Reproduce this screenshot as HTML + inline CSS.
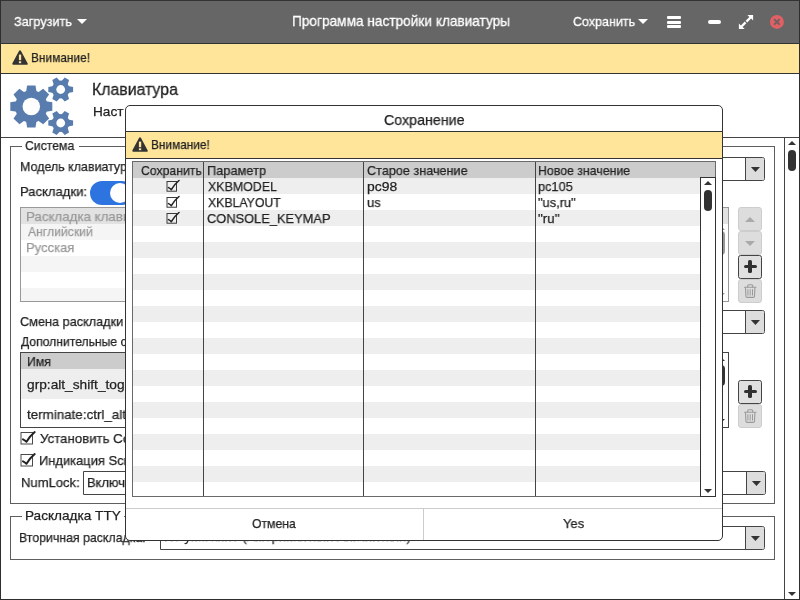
<!DOCTYPE html>
<html lang="ru">
<head>
<meta charset="utf-8">
<title>Программа настройки клавиатуры</title>
<style>
*{box-sizing:border-box;margin:0;padding:0}
html,body{width:800px;height:600px;overflow:hidden;background:#fff}
body{font-family:"Liberation Sans","DejaVu Sans",sans-serif;font-size:13px;color:#222;position:relative}
.a,.t{position:absolute}
.t{white-space:nowrap;line-height:1;transform-origin:0 0;-webkit-text-stroke:0.25px #222;will-change:transform}
#root{position:absolute;left:0;top:0;width:800px;height:600px;will-change:transform}
.warn{position:absolute;background:#ffe599}
.ln{position:absolute;background:#444}
.combo{position:absolute;border:1px solid #444;border-radius:0 2.5px 2.5px 0;background:#fff;height:24px}
.combo i{position:absolute;right:0;top:0;bottom:0;width:19px;background:#ddd;border-left:1px solid #444;border-radius:0 1.5px 1.5px 0}
.combo svg{position:absolute;left:0;top:0}
.fs{position:absolute;border:1px solid #5e5e5e}
.sq{position:absolute;width:24px;height:24px;border:1px solid #444;border-radius:2.5px;background:#e0e0e0}
.sq.dis{border-color:#cdcdcd;background:#dddddd;border-radius:3px}
.list{position:absolute;border:1px solid #444;background:#fff;overflow:hidden}
.tri-u{position:absolute;width:0;height:0;border:5px solid transparent;border-bottom:5px solid #333;border-top:0}
.tri-d{position:absolute;width:0;height:0;border:5px solid transparent;border-top:5px solid #333;border-bottom:0}
.tri-u.s{border-width:0 4px 4.2px 4px}.tri-d.s{border-width:4.2px 4px 0 4px}
.pill{position:absolute;background:#333;border-radius:4px}
</style>
</head>
<body>
<div id="root">
<!-- main window frame -->
<div class="a" style="left:0;top:0;width:800px;height:600px;border:1px solid #2e2e2e;background:#fff"></div>
<!-- title bar -->
<div class="a" style="left:1px;top:0;width:798px;height:44px;background:#666;border-top:1px solid #333;border-bottom:1px solid #333"></div>
<div class="t" style="left:13.62px;top:15px;font-size:13.6px;transform:scaleX(0.9324);color:#fff;-webkit-text-stroke:0.3px #fff;">Загрузить</div>
<div class="a" style="left:76.5px;top:19px;border:5px solid transparent;border-top:5.5px solid #fff;border-bottom:0"></div>
<div class="t" style="left:291.91px;top:13px;font-size:15px;transform:scaleX(0.9100);color:#fff;-webkit-text-stroke:0.3px #fff;">Программа настройки клавиатуры</div>
<div class="t" style="left:573.38px;top:15px;font-size:13.6px;transform:scaleX(0.9191);color:#fff;-webkit-text-stroke:0.3px #fff;">Сохранить</div>
<div class="a" style="left:638px;top:19px;border:5px solid transparent;border-top:5.5px solid #fff;border-bottom:0"></div>
<!-- hamburger -->
<div class="a" style="left:667px;top:16.2px;width:14.4px;height:3.1px;background:#fff;border-radius:1px"></div>
<div class="a" style="left:667px;top:20.6px;width:14.4px;height:3.1px;background:#fff;border-radius:1px"></div>
<div class="a" style="left:667px;top:25px;width:14.4px;height:3.1px;background:#fff;border-radius:1px"></div>
<!-- minimize -->
<div class="a" style="left:707.5px;top:19.5px;width:13.5px;height:4.5px;background:#fff;border-radius:2px"></div>
<!-- expand -->
<svg class="a" style="left:738px;top:14px" width="16" height="16" viewBox="0 0 16 16"><g fill="#fff"><path d="M9.4 0.9 H15.1 V6.6 L13.1 4.6 L9.3 8.4 L7.6 6.7 L11.4 2.9 Z"/><path d="M6.6 15.1 H0.9 V9.4 L2.9 11.4 L6.7 7.6 L8.4 9.3 L4.6 13.1 Z"/></g></svg>
<!-- close -->
<svg class="a" style="left:769px;top:14px" width="16" height="16" viewBox="0 0 16 16"><circle cx="7.9" cy="7.9" r="7" fill="#e16064"/><path d="M5.6 5.6 L10.2 10.2 M10.2 5.6 L5.6 10.2" stroke="#6e6162" stroke-width="1.9" stroke-linecap="round"/></svg>
<!-- warning bar -->
<div class="warn" style="left:1px;top:44px;width:798px;height:30px;border-bottom:1px solid #333"></div>
<svg class="a" style="left:12px;top:50px" width="16" height="16" viewBox="0 0 16 16"><path d="M8 1.3 L14.7 13.8 L1.3 13.8 Z" fill="#333" stroke="#333" stroke-width="2" stroke-linejoin="round"/><rect x="6.9" y="4.6" width="2.3" height="5.6" fill="#ffe599"/><rect x="6.9" y="11.3" width="2.3" height="1.9" fill="#ffe599"/></svg>
<div class="t" style="left:31.35px;top:51px;font-size:13.6px;transform:scaleX(0.8732);-webkit-text-stroke:0.25px #222;">Внимание!</div>
<svg class="a" style="left:0px;top:70px" width="90" height="68" viewBox="0 0 90 68"><g fill="#587cad"><circle cx="31.30" cy="36.50" r="16.20"/><path transform="rotate(0.00 31.30 36.50)" d="M46.00 31.30 L52.30 32.30 L52.30 40.70 L46.00 41.70 Z"/><path transform="rotate(45.00 31.30 36.50)" d="M46.00 31.30 L52.30 32.30 L52.30 40.70 L46.00 41.70 Z"/><path transform="rotate(90.00 31.30 36.50)" d="M46.00 31.30 L52.30 32.30 L52.30 40.70 L46.00 41.70 Z"/><path transform="rotate(135.00 31.30 36.50)" d="M46.00 31.30 L52.30 32.30 L52.30 40.70 L46.00 41.70 Z"/><path transform="rotate(180.00 31.30 36.50)" d="M46.00 31.30 L52.30 32.30 L52.30 40.70 L46.00 41.70 Z"/><path transform="rotate(225.00 31.30 36.50)" d="M46.00 31.30 L52.30 32.30 L52.30 40.70 L46.00 41.70 Z"/><path transform="rotate(270.00 31.30 36.50)" d="M46.00 31.30 L52.30 32.30 L52.30 40.70 L46.00 41.70 Z"/><path transform="rotate(315.00 31.30 36.50)" d="M46.00 31.30 L52.30 32.30 L52.30 40.70 L46.00 41.70 Z"/></g><circle cx="31.30" cy="36.50" r="8.75" fill="#fff"/><g fill="#587cad"><circle cx="60.70" cy="19.50" r="8.90"/><path transform="rotate(0.00 60.70 19.50)" d="M68.10 15.90 L73.10 17.00 L73.10 22.00 L68.10 23.10 Z"/><path transform="rotate(60.00 60.70 19.50)" d="M68.10 15.90 L73.10 17.00 L73.10 22.00 L68.10 23.10 Z"/><path transform="rotate(120.00 60.70 19.50)" d="M68.10 15.90 L73.10 17.00 L73.10 22.00 L68.10 23.10 Z"/><path transform="rotate(180.00 60.70 19.50)" d="M68.10 15.90 L73.10 17.00 L73.10 22.00 L68.10 23.10 Z"/><path transform="rotate(240.00 60.70 19.50)" d="M68.10 15.90 L73.10 17.00 L73.10 22.00 L68.10 23.10 Z"/><path transform="rotate(300.00 60.70 19.50)" d="M68.10 15.90 L73.10 17.00 L73.10 22.00 L68.10 23.10 Z"/></g><circle cx="60.70" cy="19.50" r="4.40" fill="#fff"/><g fill="#587cad"><circle cx="60.70" cy="53.00" r="8.90"/><path transform="rotate(0.00 60.70 53.00)" d="M68.10 49.40 L73.10 50.50 L73.10 55.50 L68.10 56.60 Z"/><path transform="rotate(60.00 60.70 53.00)" d="M68.10 49.40 L73.10 50.50 L73.10 55.50 L68.10 56.60 Z"/><path transform="rotate(120.00 60.70 53.00)" d="M68.10 49.40 L73.10 50.50 L73.10 55.50 L68.10 56.60 Z"/><path transform="rotate(180.00 60.70 53.00)" d="M68.10 49.40 L73.10 50.50 L73.10 55.50 L68.10 56.60 Z"/><path transform="rotate(240.00 60.70 53.00)" d="M68.10 49.40 L73.10 50.50 L73.10 55.50 L68.10 56.60 Z"/><path transform="rotate(300.00 60.70 53.00)" d="M68.10 49.40 L73.10 50.50 L73.10 55.50 L68.10 56.60 Z"/></g><circle cx="60.70" cy="53.00" r="4.40" fill="#fff"/></svg>
<div class="t" style="left:92.48px;top:81px;font-size:16.3px;transform:scaleX(0.9737);-webkit-text-stroke:0.3px #222;">Клавиатура</div>
<div class="t" style="left:92.66px;top:105px;font-size:13.6px;transform:scaleX(1.0027);-webkit-text-stroke:0.25px #222;">Наст</div>
<div class="t" style="left:125.18px;top:105px;font-size:13.6px;-webkit-text-stroke:0.25px #222;">ройка</div>
<div class="ln" style="left:1px;top:137px;width:798px;height:1px"></div>
<!-- main scrollbar -->
<div class="ln" style="left:784px;top:137px;width:1px;height:462px"></div>
<div class="tri-u s" style="left:788px;top:141px"></div>
<div class="pill" style="left:788px;top:150px;width:8px;height:21px"></div>
<div class="tri-d s" style="left:788px;top:592px"></div>
<!-- fieldset 1 -->
<div class="fs" style="left:10px;top:146px;width:765px;height:358px"></div>
<div class="a" style="left:21.5px;top:144px;width:57.5px;height:5px;background:#fff"></div>
<div class="t" style="left:25.19px;top:139px;font-size:13.6px;transform:scaleX(0.8997);-webkit-text-stroke:0.25px #222;">Система</div>
<div class="t" style="left:19.60px;top:160px;font-size:13.6px;transform:scaleX(0.9152);-webkit-text-stroke:0.25px #222;">Модель клавиатуры:</div>
<div class="combo" style="left:160px;top:157px;width:605px"><i><svg width="18" height="22" viewBox="0 0 18 22"><path d="M4.9 9 H14 L9.45 13.9 Z" fill="#333"/></svg></i></div>
<div class="t" style="left:19.56px;top:185px;font-size:13.6px;transform:scaleX(0.9602);-webkit-text-stroke:0.25px #222;">Раскладки:</div>
<div class="a" style="left:90px;top:181px;width:44px;height:24px;border-radius:12px;background:#2d74e1"></div>
<div class="a" style="left:110px;top:183px;width:20px;height:20px;border-radius:10px;background:#fff"></div>
<div class="list" style="left:20px;top:207px;width:709px;height:95px;border-color:#999">
  <div class="a" style="left:0;top:0;width:707px;height:16px;background:#e2e2e2"></div>
  <div class="a" style="left:0;top:16px;width:707px;height:16px;background:#f5f5f5"></div>
  <div class="a" style="left:0;top:48px;width:707px;height:16px;background:#f5f5f5"></div>
  <div class="a" style="left:0;top:80px;width:707px;height:16px;background:#f5f5f5"></div>
  <div class="a" style="left:692px;top:16px;width:15px;height:77px;background:#fff;border-left:1px solid #999"></div>
  <div class="tri-u s" style="left:696px;top:18px;border-bottom-color:#999"></div>
  <div class="pill" style="left:696px;top:23px;width:8px;height:24px;background:#999"></div>
  <div class="tri-d s" style="left:696px;top:85px;border-top-color:#999"></div>
</div>
</div>
<div class="t" style="left:26.43px;top:210px;font-size:13.6px;transform:scaleX(0.9794);color:#999;-webkit-text-stroke:0.25px #999;">Раскладка клавиатуры</div>
<div class="t" style="left:27.50px;top:225px;font-size:13.6px;transform:scaleX(0.8964);color:#999;-webkit-text-stroke:0.25px #999;">Английский</div>
<div class="t" style="left:26.46px;top:241px;font-size:13.6px;transform:scaleX(0.9591);color:#999;-webkit-text-stroke:0.25px #999;">Русская</div>
<div class="sq dis" style="left:738px;top:207px"><div class="tri-u" style="left:6px;top:9px;border-bottom-color:#aaa"></div></div>
<div class="sq dis" style="left:738px;top:231px"><div class="tri-d" style="left:6px;top:9px;border-top-color:#aaa"></div></div>
<div class="sq" style="left:738px;top:255px"><div class="a" style="left:4.5px;top:8.5px;width:13px;height:3.8px;background:#303030;border-radius:1.6px"></div><div class="a" style="left:9px;top:4px;width:3.8px;height:13px;background:#303030;border-radius:1.6px"></div></div>
<div class="sq dis" style="left:738px;top:279px"><svg class="a" style="left:5px;top:4px" width="14" height="15" viewBox="0 0 14 15"><g fill="none" stroke="#9a9a9a" stroke-width="1.1" stroke-linecap="round"><path d="M3.7 3 V1.7 Q3.7 0.7 4.7 0.7 H7.7 Q8.7 0.7 8.7 1.7 V3"/><path d="M0.4 3.3 H12"/><path d="M1.5 3.8 L1.9 12.3 Q2 13.4 3.1 13.4 H9.3 Q10.4 13.4 10.5 12.3 L10.9 3.8"/><path d="M3.9 5.6 V11.2 M6.2 5.6 V11.2 M8.5 5.6 V11.2" stroke-width="1"/></g></svg></div>
<div class="t" style="left:20.36px;top:315px;font-size:13.6px;transform:scaleX(0.9339);-webkit-text-stroke:0.25px #222;">Смена раскладки</div>
<div class="t" style="left:125.78px;top:315px;font-size:13.6px;-webkit-text-stroke:0.25px #222;">:</div>
<div class="combo" style="left:160px;top:310px;width:605px"><i><svg width="18" height="22" viewBox="0 0 18 22"><path d="M4.9 9 H14 L9.45 13.9 Z" fill="#333"/></svg></i></div>
<div class="t" style="left:20.94px;top:335px;font-size:13.6px;transform:scaleX(0.8932);-webkit-text-stroke:0.25px #222;">Дополнительные опции:</div>
<div class="list" style="left:20px;top:352px;width:709px;height:76px">
  <div class="a" style="left:0;top:0;width:707px;height:16px;background:#ccc"></div>
  <div class="a" style="left:0;top:16px;width:707px;height:30px;background:#eee"></div>
  <div class="a" style="left:692px;top:0;width:15px;height:74px;background:#fff;border-left:1px solid #444"></div>
  <div class="tri-u s" style="left:696px;top:3.5px"></div>
  <div class="pill" style="left:696px;top:12.3px;width:8px;height:20.5px"></div>
  <div class="tri-d s" style="left:696px;top:66px"></div>
</div>
</div>
<div class="t" style="left:26.51px;top:355px;font-size:13.6px;transform:scaleX(0.9069);-webkit-text-stroke:0.25px #222;">Имя</div>
<div class="t" style="left:26.95px;top:378px;font-size:13.6px;transform:scaleX(1.0089);-webkit-text-stroke:0.25px #222;">grp:alt_shift_toggle</div>
<div class="t" style="left:27.30px;top:408px;font-size:13.6px;transform:scaleX(0.9851);-webkit-text-stroke:0.25px #222;">terminate:ctrl_alt_bksp</div>
<div class="sq" style="left:738px;top:380px"><div class="a" style="left:4.5px;top:8.5px;width:13px;height:3.8px;background:#303030;border-radius:1.6px"></div><div class="a" style="left:9px;top:4px;width:3.8px;height:13px;background:#303030;border-radius:1.6px"></div></div>
<div class="sq dis" style="left:738px;top:404px"><svg class="a" style="left:5px;top:4px" width="14" height="15" viewBox="0 0 14 15"><g fill="none" stroke="#9a9a9a" stroke-width="1.1" stroke-linecap="round"><path d="M3.7 3 V1.7 Q3.7 0.7 4.7 0.7 H7.7 Q8.7 0.7 8.7 1.7 V3"/><path d="M0.4 3.3 H12"/><path d="M1.5 3.8 L1.9 12.3 Q2 13.4 3.1 13.4 H9.3 Q10.4 13.4 10.5 12.3 L10.9 3.8"/><path d="M3.9 5.6 V11.2 M6.2 5.6 V11.2 M8.5 5.6 V11.2" stroke-width="1"/></g></svg></div>
<svg class="a" style="left:20px;top:427px" width="18" height="18" viewBox="0 0 18 18"><rect x="1" y="5.5" width="11.5" height="11.5" fill="#fff" stroke="#4a4a4a" stroke-width="1"/><path d="M3 12.3 Q5 13.2 6.5 14.8 Q10 9 14.7 5.1" fill="none" stroke="#222" stroke-width="2" stroke-linecap="round" stroke-linejoin="round"/></svg>
<div class="t" style="left:40.17px;top:432px;font-size:13.6px;transform:scaleX(0.9748);-webkit-text-stroke:0.25px #222;">Установить Compose</div>
<svg class="a" style="left:20px;top:449px" width="18" height="18" viewBox="0 0 18 18"><rect x="1" y="5.5" width="11.5" height="11.5" fill="#fff" stroke="#4a4a4a" stroke-width="1"/><path d="M3 12.3 Q5 13.2 6.5 14.8 Q10 9 14.7 5.1" fill="none" stroke="#222" stroke-width="2" stroke-linecap="round" stroke-linejoin="round"/></svg>
<div class="t" style="left:39.47px;top:454px;font-size:13.6px;transform:scaleX(0.9499);-webkit-text-stroke:0.25px #222;">Индикация Scroll</div>
<div class="t" style="left:20.96px;top:476px;font-size:13.6px;transform:scaleX(0.9600);-webkit-text-stroke:0.25px #222;">NumLock:</div>
<div class="combo" style="left:83px;top:471px;width:683px"><i><svg width="18" height="22" viewBox="0 0 18 22"><path d="M4.9 9 H14 L9.45 13.9 Z" fill="#333"/></svg></i></div>
<div class="t" style="left:86.57px;top:476px;font-size:13.6px;transform:scaleX(0.9480);-webkit-text-stroke:0.25px #222;">Включить</div>
<!-- fieldset 2 -->
<div class="fs" style="left:10px;top:516px;width:765px;height:44px"></div>
<div class="a" style="left:21.5px;top:514px;width:102px;height:5px;background:#fff"></div>
<div class="t" style="left:24.52px;top:509px;font-size:13.6px;transform:scaleX(0.9949);-webkit-text-stroke:0.25px #222;">Раскладка TTY</div>
<div class="t" style="left:19.41px;top:531px;font-size:13.6px;transform:scaleX(0.9062);-webkit-text-stroke:0.25px #222;">Вторичная раскладка:</div>
<div class="combo" style="left:160px;top:526px;width:605px"><i><svg width="18" height="22" viewBox="0 0 18 22"><path d="M4.9 9 H14 L9.45 13.9 Z" fill="#333"/></svg></i></div>
<div class="t" style="left:164.46px;top:530px;font-size:13.6px;transform:scaleX(0.9590);-webkit-text-stroke:0.25px #222;">Не указанно (Американский Английский)</div>
<!-- dialog -->
<div class="a" style="left:125px;top:105px;width:598px;height:436px;border:1px solid #333;border-radius:5px;background:#fff"></div>
<div class="warn" style="left:126px;top:131px;width:596px;height:28px;border-top:1px solid #333;border-bottom:1px solid #333"></div>
<div class="t" style="left:383.79px;top:113px;font-size:14.6px;transform:scaleX(0.9754);-webkit-text-stroke:0.25px #222;">Сохранение</div>
<svg class="a" style="left:132px;top:137px" width="16" height="16" viewBox="0 0 16 16"><path d="M8 1.3 L14.7 13.8 L1.3 13.8 Z" fill="#333" stroke="#333" stroke-width="2" stroke-linejoin="round"/><rect x="6.9" y="4.6" width="2.3" height="5.6" fill="#ffe599"/><rect x="6.9" y="11.3" width="2.3" height="1.9" fill="#ffe599"/></svg>
<div class="t" style="left:151.05px;top:138px;font-size:13.6px;transform:scaleX(0.8693);-webkit-text-stroke:0.25px #222;">Внимание!</div>
<div class="a" style="left:132px;top:161px;width:584px;height:336px;border:1px solid #6a6a6a;background:#fff"></div>
<div class="a" style="left:133px;top:178px;width:567px;height:16px;background:#eee"></div>
<div class="a" style="left:133px;top:210px;width:567px;height:16px;background:#eee"></div>
<div class="a" style="left:133px;top:242px;width:567px;height:16px;background:#eee"></div>
<div class="a" style="left:133px;top:274px;width:567px;height:16px;background:#eee"></div>
<div class="a" style="left:133px;top:306px;width:567px;height:16px;background:#eee"></div>
<div class="a" style="left:133px;top:338px;width:567px;height:16px;background:#eee"></div>
<div class="a" style="left:133px;top:370px;width:567px;height:16px;background:#eee"></div>
<div class="a" style="left:133px;top:402px;width:567px;height:16px;background:#eee"></div>
<div class="a" style="left:133px;top:434px;width:567px;height:16px;background:#eee"></div>
<div class="a" style="left:133px;top:466px;width:567px;height:16px;background:#eee"></div>
<div class="a" style="left:133px;top:162px;width:582px;height:16px;background:#ccc"></div>
<div class="ln" style="left:203px;top:162px;width:1px;height:334px"></div>
<div class="ln" style="left:363px;top:162px;width:1px;height:334px"></div>
<div class="ln" style="left:535px;top:162px;width:1px;height:334px"></div>
<div class="a" style="left:700px;top:177px;width:16px;height:320px;border:1px solid #333;background:#fff"></div>
<div class="tri-u s" style="left:704px;top:181px"></div>
<div class="pill" style="left:704px;top:190px;width:8px;height:21px"></div>
<div class="tri-d s" style="left:704px;top:489px"></div>
<div class="t" style="left:141.39px;top:164px;font-size:13.6px;transform:scaleX(0.9003);-webkit-text-stroke:0.25px #222;">Сохранить</div>
<div class="t" style="left:206.73px;top:164px;font-size:13.6px;transform:scaleX(0.9416);-webkit-text-stroke:0.25px #222;">Параметр</div>
<div class="t" style="left:366.87px;top:164px;font-size:13.6px;transform:scaleX(0.9296);-webkit-text-stroke:0.25px #222;">Старое значение</div>
<div class="t" style="left:538.01px;top:164px;font-size:13.6px;transform:scaleX(0.9067);-webkit-text-stroke:0.25px #222;">Новое значение</div>
<svg class="a" style="left:165px;top:177px" width="16" height="16" viewBox="0 0 16 16"><rect x="2" y="4.5" width="9.5" height="9.7" fill="none" stroke="#3a3a3a" stroke-width="1"/><path d="M3.5 10.6 Q5.2 11.4 6.3 12.6 Q9.5 7.2 14 3.5" fill="none" stroke="#222" stroke-width="1.6" stroke-linecap="round" stroke-linejoin="round"/></svg>
<div class="t" style="left:207.50px;top:180px;font-size:13.6px;transform:scaleX(0.9116);-webkit-text-stroke:0.25px #222;">XKBMODEL</div>
<div class="t" style="left:366.66px;top:180px;font-size:13.6px;transform:scaleX(1.0237);-webkit-text-stroke:0.25px #222;">pc98</div>
<div class="t" style="left:538.23px;top:180px;font-size:13.6px;transform:scaleX(0.9384);-webkit-text-stroke:0.25px #222;">pc105</div>
<svg class="a" style="left:165px;top:193px" width="16" height="16" viewBox="0 0 16 16"><rect x="2" y="4.5" width="9.5" height="9.7" fill="none" stroke="#3a3a3a" stroke-width="1"/><path d="M3.5 10.6 Q5.2 11.4 6.3 12.6 Q9.5 7.2 14 3.5" fill="none" stroke="#222" stroke-width="1.6" stroke-linecap="round" stroke-linejoin="round"/></svg>
<div class="t" style="left:207.50px;top:196px;font-size:13.6px;transform:scaleX(0.9027);-webkit-text-stroke:0.25px #222;">XKBLAYOUT</div>
<div class="t" style="left:366.72px;top:196px;font-size:13.6px;transform:scaleX(0.9574);-webkit-text-stroke:0.25px #222;">us</div>
<div class="t" style="left:538.49px;top:196px;font-size:13.6px;transform:scaleX(0.9426);-webkit-text-stroke:0.25px #222;">"us,ru"</div>
<svg class="a" style="left:165px;top:209px" width="16" height="16" viewBox="0 0 16 16"><rect x="2" y="4.5" width="9.5" height="9.7" fill="none" stroke="#3a3a3a" stroke-width="1"/><path d="M3.5 10.6 Q5.2 11.4 6.3 12.6 Q9.5 7.2 14 3.5" fill="none" stroke="#222" stroke-width="1.6" stroke-linecap="round" stroke-linejoin="round"/></svg>
<div class="t" style="left:207.11px;top:212px;font-size:13.6px;transform:scaleX(0.9447);-webkit-text-stroke:0.25px #222;">CONSOLE_KEYMAP</div>
<div class="t" style="left:538.46px;top:212px;font-size:13.6px;transform:scaleX(0.9868);-webkit-text-stroke:0.25px #222;">"ru"</div>
<div class="a" style="left:126px;top:508px;width:596px;height:1px;background:#ccc"></div>
<div class="a" style="left:423px;top:508px;width:1px;height:32px;background:#ccc"></div>
<div class="t" style="left:252.25px;top:517px;font-size:13.6px;transform:scaleX(0.8960);-webkit-text-stroke:0.25px #222;">Отмена</div>
<div class="t" style="left:563.34px;top:517px;font-size:13.6px;transform:scaleX(0.9524);-webkit-text-stroke:0.25px #222;">Yes</div>
</div>
</body>
</html>
